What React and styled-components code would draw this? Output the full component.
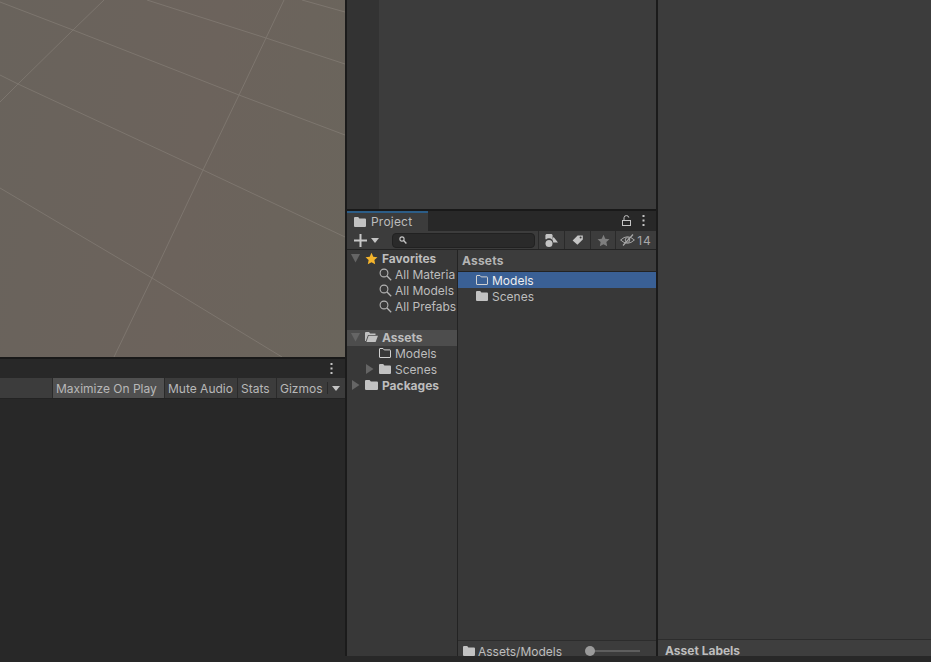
import React from 'react';
import styled, { createGlobalStyle } from 'styled-components';

const GlobalStyle = createGlobalStyle`
  html, body { margin: 0; padding: 0; background: #282828; }
  body { font-family: Inter, "Liberation Sans", sans-serif; font-size: 12px; color: #bdbdbd; }
  * { box-sizing: border-box; }
`;

// Icons
const FolderFilled = ({ size = 12 }) => (
  <svg width={size} height={10} viewBox="0 0 12 10" preserveAspectRatio="none">
    <path d="M0 1 Q0 0 1 0 H4.2 L5.4 1.4 H11 Q12 1.4 12 2.4 V9 Q12 10 11 10 H1 Q0 10 0 9 Z" fill="#c2c2c2" />
  </svg>
);

const FolderOutline = () => (
  <svg width="12" height="10" viewBox="0 0 12 10">
    <path d="M.5 1 Q.5 .5 1 .5 H4 L5.2 1.9 H11 Q11.5 1.9 11.5 2.4 V9 Q11.5 9.5 11 9.5 H1 Q.5 9.5 .5 9 Z" fill="none" stroke="#d0d0d0" />
  </svg>
);

const FolderOpen = () => (
  <svg width="13" height="10" viewBox="0 0 13 10">
    <path d="M0 1 Q0 0 1 0 H4 L5.2 1.4 H10.5 V3 H3 L0.8 9 H0 Z" fill="#c2c2c2" />
    <path d="M3.6 3.8 H13 L10.6 10 H1.4 Z" fill="#c2c2c2" />
  </svg>
);

const Caret = ({ dir = 'right' }) => (
  <svg width="9" height="10" viewBox="0 0 9 10">
    {dir === 'right'
      ? <path d="M1 0 L8.5 5 L1 10 Z" fill="#656565" />
      : <path d="M0 1 H9 L4.5 9.5 Z" fill="#656565" />}
  </svg>
);

const Spyglass = () => (
  <svg width="13" height="13" viewBox="0 0 13 13">
    <circle cx="5" cy="5" r="3.9" fill="none" stroke="#b4b4b4" strokeWidth="1.1" />
    <path d="M8 8 L12.2 12.2" stroke="#b4b4b4" strokeWidth="1.3" />
  </svg>
);

const Star = ({ fill = '#f4b42c', size = 13 }) => (
  <svg width={size} height={size} viewBox="0 0 24 24">
    <path d="M12 1.5 L15.3 8.6 L23 9.6 L17.3 14.9 L18.8 22.6 L12 18.8 L5.2 22.6 L6.7 14.9 L1 9.6 L8.7 8.6 Z" fill={fill} />
  </svg>
);

const Kebab = () => (
  <svg width="3" height="11" viewBox="0 0 3 11">
    <rect x="0.5" y="0" width="2" height="2" fill="#c4c4c4" />
    <rect x="0.5" y="4.5" width="2" height="2" fill="#c4c4c4" />
    <rect x="0.5" y="9" width="2" height="2" fill="#c4c4c4" />
  </svg>
);

const Lock = () => (
  <svg width="9" height="11" viewBox="0 0 9 11">
    <path d="M2 5 V2.8 Q2 .6 4.4 .6 Q6.6 .6 6.8 2.6" fill="none" stroke="#c4c4c4" />
    <rect x=".5" y="5.5" width="8" height="5" fill="none" stroke="#c4c4c4" />
  </svg>
);

const Plus = () => (
  <svg width="13" height="13" viewBox="0 0 13 13">
    <path d="M6.5 0 V13 M0 6.5 H13" stroke="#c8c8c8" strokeWidth="2" />
  </svg>
);

const SmallDown = ({ fill = '#c4c4c4' }) => (
  <svg width="8" height="5" viewBox="0 0 8 5">
    <path d="M0 0 H8 L4 5 Z" fill={fill} />
  </svg>
);

const ShapesIcon = () => (
  <svg width="13" height="13" viewBox="0 0 13 13">
    <path d="M1.4 0 H6.6 L7.6 1 V5 L7 5.6 A4 4 0 0 0 1 5.6 L.4 5 V1 Z" fill="#c4c4c4" />
    <circle cx="4" cy="9.4" r="3.5" fill="#c4c4c4" />
    <path d="M8.6 3 L13 8.6 H8.2 A4.6 4.6 0 0 0 7.2 5.6 Z" fill="#c4c4c4" />
  </svg>
);

const TagIcon = () => (
  <svg width="11" height="10" viewBox="0 0 11 10">
    <path d="M5.6 .4 H10.8 V4.6 L5.4 9.8 L.6 5.4 Z" fill="#c4c4c4" />
    <circle cx="8.6" cy="2.6" r="1" fill="#3c3c3c" />
  </svg>
);

const HiddenIcon = () => (
  <svg width="15" height="12" viewBox="0 0 15 12">
    <path d="M.6 6 Q7.5 -.5 14.4 6 Q7.5 12.5 .6 6 Z" fill="none" stroke="#a8a8a8" />
    <circle cx="7.5" cy="6" r="2.3" fill="none" stroke="#a8a8a8" />
    <path d="M3 11.5 L13 .5" stroke="#a8a8a8" strokeWidth="1.2" />
  </svg>
);

const SmallSearch = () => (
  <svg width="8" height="8" viewBox="0 0 8 8">
    <circle cx="3" cy="3" r="2.1" fill="none" stroke="#c4c4c4" strokeWidth="1.1" />
    <path d="M4.6 4.6 L7.4 7.4" stroke="#c4c4c4" strokeWidth="1.4" />
  </svg>
);

const GridLines = () => (
  <svg width="345" height="357" viewBox="0 0 345 357">
    <g stroke="#8f8880" strokeWidth="1" fill="none" opacity="0.5">
      <path d="M0 2 L73 30 L239 95 L345 135" />
      <path d="M147 0 L266 38 L345 64" />
      <path d="M302 0 L345 12" />
      <path d="M0 75 L18 84 L203 170 L345 237" />
      <path d="M0 188 L152 278 L282 357" />
      <path d="M284 0 L239 95 L203 170 L152 278 L114 357" />
      <path d="M104 0 L73 30 L18 84 L0 102" />
    </g>
  </svg>
);

// Page frame
const Page = styled.div`
  display: grid;
  grid-template-columns: 345px 2px 309px 2px 273px;
  width: 931px;
  height: 662px;
  overflow: hidden;
  background: #282828;
`;

const Divider = styled.div`
  background: #1b1b1b;
  height: 656px;
`;

// Left column: scene + game view
const SceneColumn = styled.section`
  display: flex;
  flex-direction: column;
`;

const Viewport = styled.div`
  height: 357px;
  line-height: 0;
  background: linear-gradient(100deg, #69635c 0%, #6c635c 55%, #6a655c 100%);
`;

const ThinRule = styled.div`
  height: 2px;
  background: #191919;
`;

const GameTabBar = styled.div`
  height: 19px;
  display: flex;
  align-items: center;
  justify-content: flex-end;
  padding-right: 12px;
  background: #282828;
`;

const GameToolbar = styled.div`
  height: 21px;
  display: flex;
  justify-content: flex-end;
  background: #3c3c3c;
  border-bottom: 1px solid #232323;
`;

const ToggleButton = styled.div`
  width: ${p => p.$w}px;
  display: flex;
  align-items: center;
  padding-left: 3px;
  border-left: 1px solid #2a2a2a;
  background: ${p => (p.$active ? '#505050' : '#3c3c3c')};
  color: #b8b8b8;
  white-space: nowrap;
`;

const GizmoArrow = styled.div`
  width: 18px;
  display: flex;
  align-items: center;
  justify-content: center;
  background: #3c3c3c;
  position: relative;
  &::before {
    content: '';
    position: absolute;
    left: 0;
    top: 4px;
    bottom: 4px;
    width: 1px;
    background: #2a2a2a;
  }
`;

// Middle column: hierarchy + project
const MiddleColumn = styled.section`
  display: flex;
  flex-direction: column;
  height: 656px;
`;

const HierarchyBody = styled.div`
  height: 209px;
  display: flex;
  background: #3c3c3c;
`;

const Gutter = styled.div`
  width: 32px;
  background: #333333;
`;

const ProjectTabBar = styled.div`
  height: 20px;
  display: flex;
  justify-content: space-between;
  align-items: center;
  background: #282828;
`;

const ProjectTab = styled.div`
  width: 81px;
  height: 20px;
  display: flex;
  align-items: center;
  gap: 5px;
  padding: 0 0 1px 7px;
  background: #3c3c3c;
  border-top: 2px solid #2c5d87;
  letter-spacing: 0.2px;
`;

const TabActions = styled.div`
  display: flex;
  align-items: center;
  gap: 11px;
  padding: 0 11px 2px 0;
`;

const ProjectToolbar = styled.div`
  height: 19px;
  display: flex;
  align-items: center;
  background: #3c3c3c;
  border-bottom: 1px solid #232323;
`;

const CreateButton = styled.div`
  width: 45px;
  display: flex;
  align-items: center;
  gap: 4px;
  padding-left: 7px;
  flex-shrink: 0;
`;

const SearchField = styled.div`
  width: 143px;
  height: 15px;
  display: flex;
  align-items: center;
  padding-left: 6px;
  background: #2a2a2a;
  border: 1px solid #212121;
  border-radius: 4px;
  flex-shrink: 0;
`;

const ToolGroup = styled.div`
  margin-left: 3px;
  display: flex;
  height: 100%;
`;

const ToolButton = styled.div`
  width: ${p => p.$w || 26}px;
  display: flex;
  align-items: center;
  justify-content: center;
  gap: 2px;
  background: #3c3c3c;
  border-left: 1px solid #2a2a2a;
  color: #a8a8a8;
  letter-spacing: 1px;
`;

const ProjectBody = styled.div`
  flex: 1;
  display: flex;
  min-height: 0;
  background: #383838;
`;

const TreePane = styled.div`
  width: 111px;
  flex-shrink: 0;
  overflow: hidden;
  padding-top: 1px;
  border-right: 1px solid #232323;
`;

const TreeRow = styled.div`
  height: 16px;
  display: flex;
  align-items: center;
  gap: ${p => p.$gap || 4}px;
  padding: 0 0 2px ${p => p.$indent}px;
  margin-top: ${p => p.$top || 0}px;
  background: ${p => (p.$selected ? '#4d4d4d' : 'transparent')};
  font-weight: ${p => (p.$bold ? 700 : 400)};
  white-space: nowrap;
`;

const CaretSlot = styled.span`
  width: 10px;
  display: flex;
  flex-shrink: 0;
`;

const ListPane = styled.div`
  flex: 1;
  min-width: 0;
  display: flex;
  flex-direction: column;
`;

const ListHeader = styled.div`
  height: 22px;
  display: flex;
  align-items: center;
  padding: 0 0 1px 4px;
  background: #3c3c3c;
  border-bottom: 1px solid #232323;
  font-weight: 700;
  letter-spacing: 0.2px;
  color: #b4b4b4;
`;

const ListRow = styled.div`
  height: 16px;
  display: flex;
  align-items: center;
  gap: 4px;
  padding-left: 18px;
  background: ${p => (p.$selected ? '#3a6095' : 'transparent')};
  color: ${p => (p.$selected ? '#eeeeee' : '#bdbdbd')};
`;

const ListSpacer = styled.div`
  flex: 1;
`;

const PathBar = styled.div`
  height: 16px;
  display: flex;
  align-items: center;
  gap: 3px;
  padding: 5px 0 0 5px;
  background: #3c3c3c;
  border-top: 1px solid #2c2c2c;
`;

const PathLabel = styled.span`
  width: 107px;
  white-space: nowrap;
`;

const ZoomTrack = styled.div`
  position: relative;
  width: 52px;
  height: 2px;
  background: #5e5e5e;
`;

const ZoomThumb = styled.div`
  position: absolute;
  left: -3px;
  top: -4px;
  width: 10px;
  height: 10px;
  border-radius: 50%;
  background: #9a9a9a;
`;

// Right column: inspector
const InspectorColumn = styled.section`
  display: flex;
  flex-direction: column;
  height: 656px;
  background: #3c3c3c;
`;

const InspectorFill = styled.div`
  flex: 1;
`;

const LabelsBar = styled.div`
  height: 17px;
  display: flex;
  align-items: center;
  padding: 5px 0 0 7px;
  background: #3e3e3e;
  border-top: 1px solid #2c2c2c;
  font-weight: 700;
  color: #bdbdbd;
`;

const favorites = ['All Materia', 'All Models', 'All Prefabs'];

const App = () => (
  <>
    <GlobalStyle />
    <Page>
      <SceneColumn>
        <Viewport><GridLines /></Viewport>
        <ThinRule />
        <GameTabBar><Kebab /></GameTabBar>
        <GameToolbar>
          <ToggleButton $active $w={112}>Maximize On Play</ToggleButton>
          <ToggleButton $w={73}>Mute Audio</ToggleButton>
          <ToggleButton $w={39}>Stats</ToggleButton>
          <ToggleButton $w={51}>Gizmos</ToggleButton>
          <GizmoArrow><SmallDown /></GizmoArrow>
        </GameToolbar>
      </SceneColumn>
      <Divider />
      <MiddleColumn>
        <HierarchyBody><Gutter /></HierarchyBody>
        <ThinRule />
        <ProjectTabBar>
          <ProjectTab><FolderFilled />Project</ProjectTab>
          <TabActions><Lock /><Kebab /></TabActions>
        </ProjectTabBar>
        <ProjectToolbar>
          <CreateButton><Plus /><SmallDown /></CreateButton>
          <SearchField><SmallSearch /></SearchField>
          <ToolGroup>
            <ToolButton><ShapesIcon /></ToolButton>
            <ToolButton><TagIcon /></ToolButton>
            <ToolButton $w={25}><Star fill="#7e7e7e" /></ToolButton>
            <ToolButton $w={41}><HiddenIcon />14</ToolButton>
          </ToolGroup>
        </ProjectToolbar>
        <ProjectBody>
          <TreePane>
            <TreeRow $indent={4} $bold><CaretSlot><Caret dir="down" /></CaretSlot><Star />Favorites</TreeRow>
            {favorites.map(name => (
              <TreeRow key={name} $indent={32} $gap={3}><Spyglass />{name}</TreeRow>
            ))}
            <TreeRow $indent={4} $top={15} $selected $bold><CaretSlot><Caret dir="down" /></CaretSlot><FolderOpen />Assets</TreeRow>
            <TreeRow $indent={32}><FolderOutline />Models</TreeRow>
            <TreeRow $indent={18}><CaretSlot><Caret /></CaretSlot><FolderFilled />Scenes</TreeRow>
            <TreeRow $indent={4} $bold><CaretSlot><Caret /></CaretSlot><FolderFilled size={13} />Packages</TreeRow>
          </TreePane>
          <ListPane>
            <ListHeader>Assets</ListHeader>
            <ListRow $selected><FolderOutline />Models</ListRow>
            <ListRow><FolderFilled />Scenes</ListRow>
            <ListSpacer />
            <PathBar>
              <FolderFilled />
              <PathLabel>Assets/Models</PathLabel>
              <ZoomTrack><ZoomThumb /></ZoomTrack>
            </PathBar>
          </ListPane>
        </ProjectBody>
      </MiddleColumn>
      <Divider />
      <InspectorColumn>
        <InspectorFill />
        <LabelsBar>Asset Labels</LabelsBar>
      </InspectorColumn>
    </Page>
  </>
);

export default App;
